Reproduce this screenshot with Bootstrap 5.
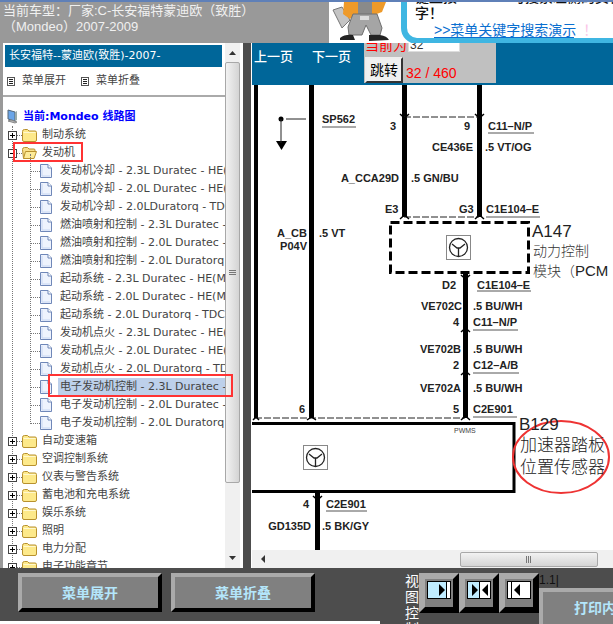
<!DOCTYPE html>
<html lang="zh">
<head>
<meta charset="UTF-8">
<title>线路图</title>
<link href="https://cdn.jsdelivr.net/npm/bootstrap@5.3.3/dist/css/bootstrap.min.css" rel="stylesheet">
<style>
html, body { margin: 0; width: 613px; height: 624px; overflow: hidden; background: #4d4d4d; }
body { font-family: "Liberation Sans", "Noto Sans CJK SC", sans-serif; }
.page-top { height: 43px; background: #999; overflow: hidden; border-top: 2px solid #5f80b8; }
.car-title { width: 329px; color: #f0f0f0; font-size: 13px; line-height: 16px; padding: 1px 0 0 3px; }
.ad-box { flex: 1; background: #fff; height: 41px; overflow: hidden; position: relative; }
.mechanic { width: 64px; height: 41px; margin-left: 3px; flex: none; }
.bubble { width: 240px; height: 61px; margin: -19px 0 0 5px; border: 6px solid #3fb6e2; border-radius: 16px; background: #fff; flex: none; padding-left: 8px; font-size: 14px; line-height: 16px; color: #111; white-space: nowrap; font-weight: 500; }
.ad-link { display: block; margin: 2px 0 0 19px; color: #0a6fd0; border-bottom: 1px solid #0a6fd0; width: 140px; line-height: 14px; font-weight: 400; }
.ad-link b { color: #fbc6e8; margin-left: 7px; font-weight: 400; }
.page-main { height: 525px; }
.left-side { width: 243px; flex: none; background: #fff; border-left: 3px solid #999; position: relative; }
.menu-area { width: 222px; flex: none; overflow: hidden; font-family: "DejaVu Sans", "Noto Sans CJK SC", sans-serif; font-size: 11px; color: #444; }
.menu-head { margin: 2px 0 0 2px; width: 217px; height: 22px; background: #069; color: #fff; line-height: 22px; padding-left: 4px; white-space: nowrap; }
.menu-tools { height: 30px; border-bottom: 2px solid #aaa; padding-left: 4px; gap: 8px; }
.menu-tools span { margin: 0 7px 0 0; }
.menu-tools svg { margin-right: 7px; }
.tree-top { height: 18px; margin-top: 11px; padding-left: 4px; color: #00f; font-weight: 700; white-space: nowrap; }
.tree-top svg { margin-right: 5px; }
.tree-body { position: relative; }
.tree-body::before { content: ""; position: absolute; left: 9px; top: 0; bottom: 0; border-left: 1px dotted #777; }
.tree-kids { position: relative; }
.tree-kids::before { content: ""; position: absolute; left: 27px; top: -8px; height: 270px; border-left: 1px dotted #777; }
.tree-row { height: 18px; white-space: nowrap; display: flex; align-items: center; position: relative; }
.tree-row .pm { margin-left: 5px; flex: none; position: relative; background: #fff; }
.tree-row .dots { width: 5px; border-top: 1px dotted #777; flex: none; }
.tree-row .folder { flex: none; }
.tree-row .txt { margin-left: 5px; }
.kid-row { padding-left: 27px; }
.kid-row .dots { width: 10px; }
.kid-row .txt { margin-left: 6px; padding: 0 0 0 2px; flex: 1; line-height: 18px; }
.kid-row .pick { background: #bdd0ea; }
.red-box { position: absolute; border: 2px solid #f33; }
.red-a { left: 10px; top: 99px; width: 70px; height: 20px; }
.red-b { left: 45px; top: 331px; width: 185px; height: 23px; }
.v-scroll { width: 15px; margin-left: 0; background: #f0f0f0; flex: none; }
.v-thumb { height: 421px; margin-top: 0; border: 1px solid #a8a8a8; border-radius: 2px; background: linear-gradient(90deg, #f2f2f2, #d4d4d4); }
.v-up, .v-down { height: 19px; }
.v-gap { flex: 1; }
.split { width: 8px; background: #4d4d4d; flex: none; }
.right-side { flex: 1; background: #fff; border-left: 1px solid #fff; min-width: 0; overflow: hidden; }
.tool-bar { height: 42px; background: #069; color: #fff; position: relative; flex: none; padding-left: 2px; }
.pg-link { font-size: 13px; width: 58px; line-height: 28px; font-weight: 500; height: 28px; }
.pg-link + .pg-link { width: 52px; }
.jump-box { width: 132px; height: 40px; background: #c0c0c0; overflow: hidden; padding-left: 1px; font-size: 14px; color: #f00; }
.jump-top { height: 16px; margin-top: -6px; line-height: 16px; white-space: nowrap; gap: 1px; }
.jump-top div { background: #fff; width: 52px; height: 15px; border: 1px solid #ddd; color: #333; font-size: 12px; line-height: 14px; padding-left: 1px; }
.jump-btn { width: 38px; height: 26px; margin-top: 4px; padding: 0; border: 2px solid; border-color: #eee #333 #333 #eee; border-radius: 0; background: #f0f0f0; color: #000; font-size: 14px; line-height: 20px; }
.jump-num { margin: 12px 0 0 3px; line-height: 16px; }
.jump-low { height: 30px; }
.wire-pic { display: block; width: 360px; height: 465px; flex: none; }
.wire-pic text { font-family: "Liberation Sans", sans-serif; font-weight: 700; font-size: 11px; fill: #222; }
.wire-pic .big { font-weight: 400; font-size: 17px; fill: #222; }
.wire-pic .cn { font-family: "Noto Sans CJK SC", sans-serif; font-weight: 300; font-size: 14px; fill: #333; }
.wire-pic .cn tspan { font-family: "Liberation Sans", sans-serif; font-weight: 400; font-size: 15px; fill: #222; }
.wire-pic .cn-big { font-family: "Noto Sans CJK SC", sans-serif; font-weight: 300; font-size: 17px; fill: #222; }
.wire-pic .tiny { font-weight: 400; font-size: 7px; fill: #444; }
.h-scroll { height: 18px; background: #f0f0f0; padding-left: 8px; }
.h-thumb { width: 138px; height: 15px; margin-left: 194px; border: 1px solid #a8a8a8; border-radius: 2px; background: linear-gradient(#f2f2f2, #d4d4d4); }
.page-foot { height: 56px; background: linear-gradient(#fff, #fff) 0 100% / 380px 3px no-repeat, #4d4d4d; padding: 5px 0 0 18px; overflow: hidden; }
.foot-btn { width: 144px; height: 39px; padding: 0; border-style: solid; border-width: 4px; border-color: #aaa #000 #000 #aaa; border-radius: 0; background: #808080; color: #b4e6fb; font-size: 14px; font-weight: 700; line-height: 30px; flex: none; }
.foot-btn:hover { background: #808080; color: #b4e6fb; border-color: #aaa #000 #000 #aaa; }
.foot-gap { margin-left: 9px; }
.view-word { width: 14px; margin-left: 90px; color: #fff; font-size: 14px; line-height: 16px; flex: none; height: 60px; }
.view-btn { width: 40px; height: 40px; border-style: solid; border-width: 6px; border-color: #aaa #000 #000 #aaa; background: #808080; flex: none; padding: 2px 0 0 2px; }
.print-wrap { flex: none; font-size: 12px; color: #111; line-height: 15px; width: 110px; }
.print-btn { width: 110px; height: 40px; margin-top: 0; text-align: left; padding-left: 31px; }
</style>
</head>
<body>
<svg width="0" height="0" class="d-block position-absolute">
  <symbol id="plus" viewBox="0 0 9 9"><rect x=".5" y=".5" width="8" height="8" fill="#fff" stroke="#444"/><path d="M2 4.5h5M4.5 2v5" stroke="#000"/></symbol>
  <symbol id="minus" viewBox="0 0 9 9"><rect x=".5" y=".5" width="8" height="8" fill="#fff" stroke="#444"/><path d="M2 4.5h5" stroke="#000"/></symbol>
  <symbol id="folder" viewBox="0 0 15 14"><path d="M.5 3.5q0-2 2-2h3l1.5 1.5h6q1.500 0 1.500 1.500v7.500q0 1.500-1.500 1.500h-11q-1.500 0-1.500-1.500z" fill="#fde98a" stroke="#b8912e"/><path d="M1.500 4.500h12" stroke="#fff8cf"/></symbol>
  <symbol id="folder-open" viewBox="0 0 15 14"><path d="M1.500 12.500l-1-9q0-2 2-2h3l1.500 1.500h5q1 0 1 1v2" fill="#f8e08a" stroke="#b8912e"/><path d="M1.500 12.500l2-7h11l-2.500 7z" fill="#fdeb98" stroke="#b8912e"/></symbol>
  <symbol id="page" viewBox="0 0 12 14"><path d="M.5.500h7.500l3.500 3.500v9.500h-11z" fill="#eef3fd" stroke="#6f87b8"/><path d="M8 .5v3.500h3.500" fill="#fff" stroke="#6f87b8"/><path d="M2 2v10h8" fill="none" stroke="#c7d6f2"/></symbol>
  <symbol id="list-ico" viewBox="0 0 8 9"><rect x=".5" y=".5" width="7" height="8" fill="#fff" stroke="#555"/><path d="M2 2.500h4M2 4.500h4M2 6.500h4" stroke="#222"/></symbol>
  <symbol id="chip" viewBox="0 0 25 25"><rect x=".5" y=".5" width="24" height="24" fill="#fff" stroke="#888"/><circle cx="12.500" cy="12.500" r="9" fill="none" stroke="#222" stroke-width="1.300"/><path d="M6 9l5 4h3l5-4M12.500 13v8" fill="none" stroke="#222" stroke-width="1.300"/></symbol>
</svg>

<div class="page-top d-flex">
  <div class="car-title">当前车型：厂家:C-长安福特蒙迪欧（致胜）<br>（Mondeo）2007-2009</div>
  <div class="ad-box d-flex">
    <svg class="mechanic" viewBox="0 0 64 41">
      <path d="M1 8l9-3 8 13-8 8z" fill="#c4c4c4" stroke="#777"/>
      <path d="M12 0h42l-4 10-8 3H22l-4 4-7-5z" fill="#ee9a2a"/>
      <rect x="26" y="0" width="14" height="12" fill="#8a8a8a"/>
      <path d="M21 12h24l5 14-2 7H39l-5-10-4 10H17l-1-8z" fill="#a5a5a5" stroke="#6f6f6f"/>
      <rect x="28" y="14" width="9" height="4" fill="#dcdcdc"/>
      <path d="M8 36q5-4 13-3l2 5H8zM37 33h11q7 1 9 5l-20 1z" fill="#232323"/>
    </svg>
    <div class="bubble">键盘按 &nbsp;Ctrl+F &nbsp;可搜索左侧的资料<br>字！<a class="ad-link text-decoration-none">&gt;&gt;菜单关键字搜索演示<b>！</b></a></div>
  </div>
</div>

<div class="page-main d-flex">
  <div class="left-side d-flex">
    <div class="menu-area">
      <div class="menu-head">长安福特--蒙迪欧(致胜)-2007-</div>
      <div class="menu-tools d-flex align-items-center">
        <span class="d-flex align-items-center"><svg width="8" height="9"><use href="#list-ico"/></svg>菜单展开</span>
        <span class="d-flex align-items-center"><svg width="8" height="9"><use href="#list-ico"/></svg>菜单折叠</span>
      </div>
      <div class="tree-top d-flex align-items-center">
        <svg width="11" height="16" viewBox="0 0 11 16"><path d="M1 1l7 2v9l-7-2z" fill="#6aa5e8" stroke="#567"/><path d="M8 3l2-1v9l-2 1z" fill="#9aa"/><path d="M1 12l7 2 2-1-6-2z" fill="#bbb" stroke="#888"/></svg>当前:Mondeo 线路图
      </div>
      <div class="tree-body">
        <div class="tree-row"><svg class="pm" width="9" height="9"><use href="#plus"/></svg><i class="dots"></i><svg class="folder" width="15" height="14"><use href="#folder"/></svg><span class="txt">制动系统</span></div>
        <div class="tree-row"><svg class="pm" width="9" height="9"><use href="#minus"/></svg><i class="dots"></i><svg class="folder" width="15" height="14"><use href="#folder-open"/></svg><span class="txt">发动机</span></div>
        <div class="tree-kids">
          <div class="tree-row kid-row"><i class="dots"></i><svg class="folder" width="12" height="14"><use href="#page"/></svg><span class="txt">发动机冷却 - 2.3L Duratec - HE(MI4)</span></div>
          <div class="tree-row kid-row"><i class="dots"></i><svg class="folder" width="12" height="14"><use href="#page"/></svg><span class="txt">发动机冷却 - 2.0L Duratec - HE(MI4)</span></div>
          <div class="tree-row kid-row"><i class="dots"></i><svg class="folder" width="12" height="14"><use href="#page"/></svg><span class="txt">发动机冷却 - 2.0LDuratorq - TDCi</span></div>
          <div class="tree-row kid-row"><i class="dots"></i><svg class="folder" width="12" height="14"><use href="#page"/></svg><span class="txt">燃油喷射和控制 - 2.3L Duratec - HE</span></div>
          <div class="tree-row kid-row"><i class="dots"></i><svg class="folder" width="12" height="14"><use href="#page"/></svg><span class="txt">燃油喷射和控制 - 2.0L Duratec - HE</span></div>
          <div class="tree-row kid-row"><i class="dots"></i><svg class="folder" width="12" height="14"><use href="#page"/></svg><span class="txt">燃油喷射和控制 - 2.0L Duratorq - TDCi</span></div>
          <div class="tree-row kid-row"><i class="dots"></i><svg class="folder" width="12" height="14"><use href="#page"/></svg><span class="txt">起动系统 - 2.3L Duratec - HE(MI4)</span></div>
          <div class="tree-row kid-row"><i class="dots"></i><svg class="folder" width="12" height="14"><use href="#page"/></svg><span class="txt">起动系统 - 2.0L Duratec - HE(MI4)</span></div>
          <div class="tree-row kid-row"><i class="dots"></i><svg class="folder" width="12" height="14"><use href="#page"/></svg><span class="txt">起动系统 - 2.0L Duratorq - TDCi</span></div>
          <div class="tree-row kid-row"><i class="dots"></i><svg class="folder" width="12" height="14"><use href="#page"/></svg><span class="txt">发动机点火 - 2.3L Duratec - HE(MI4)</span></div>
          <div class="tree-row kid-row"><i class="dots"></i><svg class="folder" width="12" height="14"><use href="#page"/></svg><span class="txt">发动机点火 - 2.0L Duratec - HE(MI4)</span></div>
          <div class="tree-row kid-row"><i class="dots"></i><svg class="folder" width="12" height="14"><use href="#page"/></svg><span class="txt">发动机点火 - 2.0L Duratorq - TDCi</span></div>
          <div class="tree-row kid-row"><i class="dots"></i><svg class="folder" width="12" height="14"><use href="#page"/></svg><span class="txt pick">电子发动机控制 - 2.3L Duratec - HE</span></div>
          <div class="tree-row kid-row"><i class="dots"></i><svg class="folder" width="12" height="14"><use href="#page"/></svg><span class="txt">电子发动机控制 - 2.0L Duratec - HE</span></div>
          <div class="tree-row kid-row"><i class="dots"></i><svg class="folder" width="12" height="14"><use href="#page"/></svg><span class="txt">电子发动机控制 - 2.0L Duratorq - TDCi</span></div>
        </div>
        <div class="tree-row"><svg class="pm" width="9" height="9"><use href="#plus"/></svg><i class="dots"></i><svg class="folder" width="15" height="14"><use href="#folder"/></svg><span class="txt">自动变速箱</span></div>
        <div class="tree-row"><svg class="pm" width="9" height="9"><use href="#plus"/></svg><i class="dots"></i><svg class="folder" width="15" height="14"><use href="#folder"/></svg><span class="txt">空调控制系统</span></div>
        <div class="tree-row"><svg class="pm" width="9" height="9"><use href="#plus"/></svg><i class="dots"></i><svg class="folder" width="15" height="14"><use href="#folder"/></svg><span class="txt">仪表与警告系统</span></div>
        <div class="tree-row"><svg class="pm" width="9" height="9"><use href="#plus"/></svg><i class="dots"></i><svg class="folder" width="15" height="14"><use href="#folder"/></svg><span class="txt">蓄电池和充电系统</span></div>
        <div class="tree-row"><svg class="pm" width="9" height="9"><use href="#plus"/></svg><i class="dots"></i><svg class="folder" width="15" height="14"><use href="#folder"/></svg><span class="txt">娱乐系统</span></div>
        <div class="tree-row"><svg class="pm" width="9" height="9"><use href="#plus"/></svg><i class="dots"></i><svg class="folder" width="15" height="14"><use href="#folder"/></svg><span class="txt">照明</span></div>
        <div class="tree-row"><svg class="pm" width="9" height="9"><use href="#plus"/></svg><i class="dots"></i><svg class="folder" width="15" height="14"><use href="#folder"/></svg><span class="txt">电力分配</span></div>
        <div class="tree-row"><svg class="pm" width="9" height="9"><use href="#plus"/></svg><i class="dots"></i><svg class="folder" width="15" height="14"><use href="#folder"/></svg><span class="txt">电子功能章节</span></div>
      </div>
    </div>
    <div class="v-scroll d-flex flex-column">
      <svg class="v-up" width="15" height="19"><path d="M4 12l3.500-4 3.500 4z" fill="#333"/></svg>
      <div class="v-thumb d-flex align-items-center justify-content-center"><svg width="7" height="6"><path d="M0 .5h7M0 2.500h7M0 4.500h7" stroke="#777"/></svg></div>
      <div class="v-gap"></div>
      <svg class="v-down" width="15" height="19"><path d="M4 7l3.500 4 3.500-4z" fill="#333"/></svg>
    </div>
    <div class="red-box red-a"></div>
    <div class="red-box red-b"></div>
  </div>
  <div class="split"></div>
  <div class="right-side d-flex flex-column">
    <div class="tool-bar d-flex">
      <div class="pg-link">上一页</div>
      <div class="pg-link">下一页</div>
      <div class="jump-box">
        <div class="jump-top d-flex">当前为<div>32</div></div>
        <div class="jump-low d-flex">
          <button class="btn jump-btn" type="button">跳转</button>
          <div class="jump-num">32 / 460</div>
        </div>
      </div>
    </div>
    <svg class="wire-pic" viewBox="253 85 360 465">
      <g fill="#000">
        <rect x="255" y="85" width="4" height="333"/>
        <rect x="310" y="85" width="5" height="333"/>
        <rect x="403" y="85" width="5" height="132"/>
        <rect x="478" y="85" width="5" height="132"/>
        <rect x="464" y="272" width="5" height="146"/>
        <rect x="316" y="492" width="5" height="58"/>
        <circle cx="282" cy="119" r="2.500"/><circle cx="312.500" cy="119" r="2.500"/>
        <path d="M277 141h11l-5.500 9z"/>
      </g>
      <g fill="none" stroke="#222">
        <path d="M287 119h20M282 119v24" stroke-width="1"/>
        <path d="M405 117h75M405 217h75M256 418h210" stroke-dasharray="7 2"/>
        <path d="M323 127h34M489 133h46M487 217h54M478 291h54M474 330h45M474 373h46M474 417h44M327 511h41" stroke="#555"/>
      </g>
      <g fill="none" stroke="#000" stroke-width="1.500">
        <path d="M401 114l4.500 4 4.500-4M476 114l4.500 4 4.500-4M401 219l4.500-4 4.500 4M476 219l4.500-4 4.500 4M462 275l4.500 4 4.500-4M462 332l4.500-4 4.500 4M462 375l4.500-4 4.500 4M462 420l4.500-4 4.500 4M254 420l3-3 3 3M308 420l4.500-3 4.500 3M314 496l4.500 4 4.500-4"/>
      </g>
      <rect x="391.500" y="222.500" width="138" height="50" fill="#fff" stroke="#000" stroke-width="3" stroke-dasharray="9 4"/>
      <rect x="464" y="274" width="5" height="6" fill="#000"/>
      <use href="#chip" x="447" y="235" width="25" height="25"/>
      <path d="M250 423.500h265v68H250z" fill="#fff" stroke="#000" stroke-width="3"/>
      <use href="#chip" x="304" y="445" width="25" height="25"/>
      <ellipse cx="562" cy="457" rx="48" ry="36" fill="none" stroke="#e33" stroke-width="2"/>
      <text x="323" y="123">SP562</text>
      <text x="391" y="130">3</text>
      <text x="465" y="130">9</text>
      <text x="489" y="130">C11–N/P</text>
      <text x="474" y="151" text-anchor="end">CE436E</text>
      <text x="486" y="151">.5 VT/OG</text>
      <text x="400" y="182" text-anchor="end">A_CCA29D</text>
      <text x="412" y="182">.5 GN/BU</text>
      <text x="386" y="213">E3</text>
      <text x="460" y="213">G3</text>
      <text x="487" y="213">C1E104–E</text>
      <text x="308" y="237" text-anchor="end">A_CB</text>
      <text x="320" y="237">.5 VT</text>
      <text x="308" y="250" text-anchor="end">P04V</text>
      <text class="big" x="533" y="237">A147</text>
      <text class="cn" x="534" y="256">动力控制</text>
      <text class="cn" x="534" y="276">模块（<tspan>PCM</tspan></text>
      <text x="443" y="289">D2</text>
      <text x="478" y="289">C1E104–E</text>
      <text x="463" y="310" text-anchor="end">VE702C</text>
      <text x="474" y="310">.5 BU/WH</text>
      <text x="454" y="326">4</text>
      <text x="474" y="326">C11–N/P</text>
      <text x="462" y="353" text-anchor="end">VE702B</text>
      <text x="474" y="353">.5 BU/WH</text>
      <text x="454" y="369">2</text>
      <text x="474" y="369">C12–A/B</text>
      <text x="462" y="392" text-anchor="end">VE702A</text>
      <text x="474" y="392">.5 BU/WH</text>
      <text x="454" y="413">5</text>
      <text x="474" y="413">C2E901</text>
      <text x="300" y="413">6</text>
      <text class="tiny" x="455" y="433">PWMS</text>
      <text class="big" x="520" y="430">B129</text>
      <text class="cn-big" x="521" y="451">加速器踏板</text>
      <text class="cn-big" x="521" y="473">位置传感器</text>
      <text x="304" y="508">4</text>
      <text x="327" y="508">C2E901</text>
      <text x="312" y="530" text-anchor="end">GD135D</text>
      <text x="323" y="530">.5 BK/GY</text>
    </svg>
    <div class="h-scroll d-flex align-items-center">
      <svg width="6" height="8"><path d="M5 0v8L1 4z" fill="#333"/></svg>
      <div class="h-thumb d-flex align-items-center justify-content-center"><svg width="7" height="7"><path d="M.5 0v7M2.500 0v7M4.500 0v7" stroke="#777"/></svg></div>
    </div>
  </div>
</div>

<div class="page-foot d-flex">
  <button class="btn foot-btn" type="button">菜单展开</button>
  <button class="btn foot-btn foot-gap" type="button">菜单折叠</button>
  <div class="view-word">视图控制</div>
  <div class="view-btn"><svg class="d-block" width="24" height="18"><rect x=".5" y=".5" width="23" height="17" fill="#c0ecff" stroke="#000"/><path d="M20 1h3v16h-3" fill="#fff"/><path d="M19.500 .5v17" stroke="#000"/><path d="M12 3l6 6-6 6z" fill="#000"/></svg></div>
  <div class="view-btn"><svg class="d-block" width="24" height="18"><rect x=".5" y=".5" width="23" height="17" fill="#fff" stroke="#000"/><rect x="1" y="1" width="11" height="16" fill="#c0ecff"/><path d="M12.500 .5v17" stroke="#000"/><path d="M5 3l6 6-6 6zM21 3l-6 6 6 6z" fill="#000"/></svg></div>
  <div class="view-btn"><svg class="d-block" width="24" height="18"><rect x=".5" y=".5" width="23" height="17" fill="#fff" stroke="#000"/><path d="M4.500 .5v17" stroke="#000"/><path d="M13 3l-6 6 6 6z" fill="#000"/></svg></div>
  <div class="print-wrap">1.1|<button class="btn foot-btn print-btn" type="button">打印内容</button></div>
</div>
</body>
</html>
